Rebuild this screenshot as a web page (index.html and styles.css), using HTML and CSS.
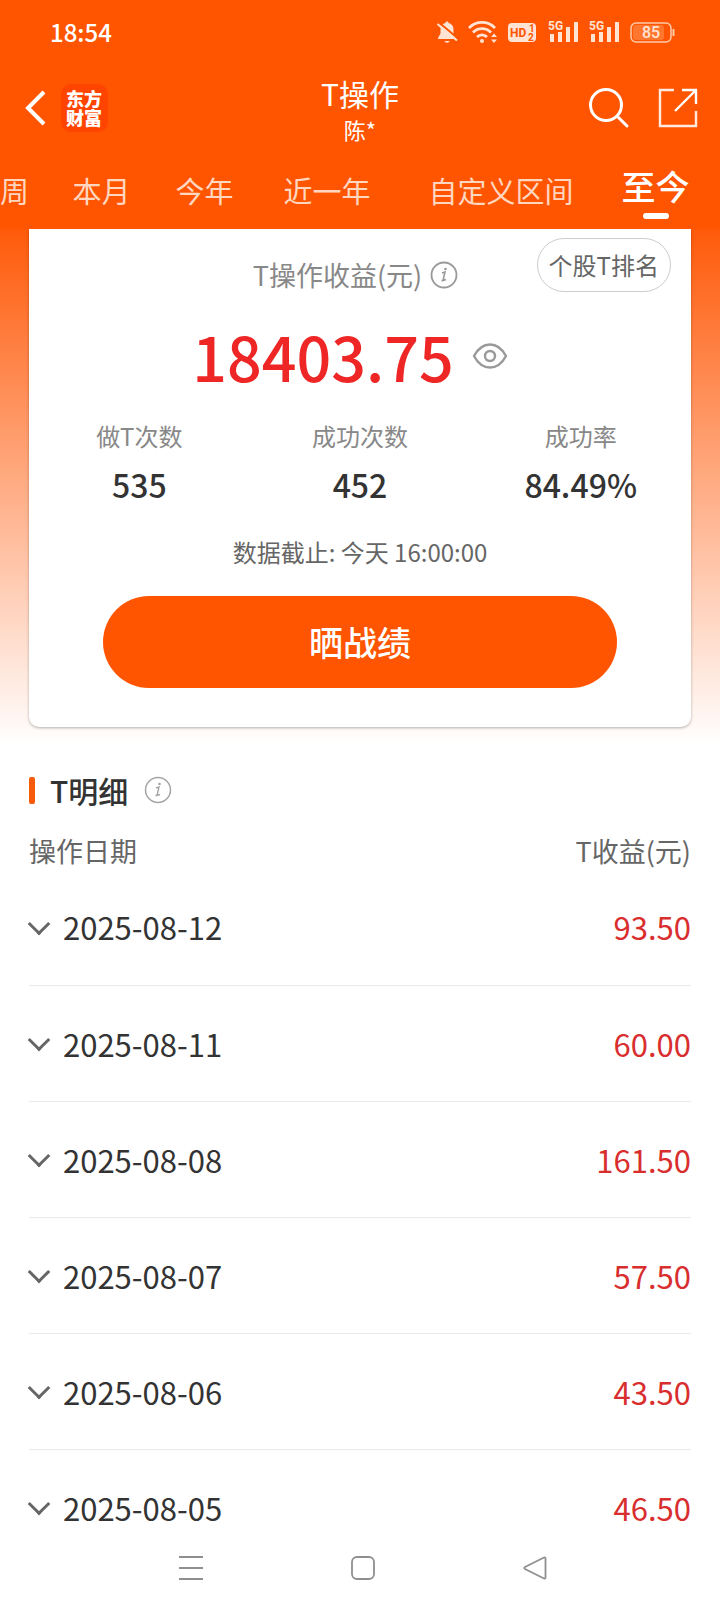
FILE: index.html
```html
<!DOCTYPE html>
<html lang="zh-CN">
<head>
    <meta charset="UTF-8">
    <meta name="viewport" content="width=device-width, initial-scale=1.0">
    <title>T操作</title>
    <link rel="stylesheet" href="styles.css">
</head>
<body>
    <header class="top">
        <div class="status-bar">
            <span class="clock">18:54</span>
            <div class="status-icons">
                <svg width="22" height="24" viewBox="0 0 22 24">
                    <path d="M11 1.500c.9 0 1.500.6 1.500 1.400 3.200.7 5 3.200 5 6.300v4.300l2.500 4.500v1H2v-1l2.500-4.500V9.200c0-3.100 1.800-5.600 5-6.300 0-.8.6-1.400 1.500-1.400zM8.500 21h5a2.500 1.800 0 0 1-5 0z" fill="#ffe3d3"/>
                    <path d="M3 2.500L22 18.500" stroke="#ff5500" stroke-width="2"/>
                    <path d="M1.500 4L21 20.500" stroke="#ffe3d3" stroke-width="2"/>
                </svg>
                <svg width="30" height="24" viewBox="0 0 30 24" fill="none" stroke="#ffe3d3" stroke-width="2.800">
                    <path d="M1 8a18 18 0 0 1 26 0M5 12.500a12.500 12.500 0 0 1 18 0M9 17a7 7 0 0 1 10 0"/>
                    <circle cx="14" cy="21" r="2" fill="#ffe3d3" stroke="none"/>
                    <path d="M23 17l3-3.500 3 3.500zM23 19.500h6l-3 3.500z" fill="#ffe3d3" stroke="none"/>
                </svg>
                <svg width="30" height="24" viewBox="0 0 30 24">
                    <rect x="0" y="3" width="28" height="19" rx="4" fill="#ffe3d3"/>
                    <text x="2" y="17" class="hd-text">HD</text>
                    <text x="21" y="12" class="hd-small">1</text>
                    <text x="20" y="21" class="hd-small">2</text>
                </svg>
                <svg width="31" height="24" viewBox="0 0 31 24" fill="#ffe3d3">
                    <path d="M2 14h4v8H2zM10 12h4v10h-4zM18 7h4v15h-4zM26 2h4v20h-4z"/>
                    <text x="0" y="10" class="net-text">5G</text>
                </svg>
                <svg width="31" height="24" viewBox="0 0 31 24" fill="#ffe3d3">
                    <path d="M2 14h4v8H2zM10 12h4v10h-4zM18 7h4v15h-4zM26 2h4v20h-4z"/>
                    <text x="0" y="10" class="net-text">5G</text>
                </svg>
                <svg width="45" height="24" viewBox="0 0 45 24">
                    <rect x="1" y="3" width="40" height="19" rx="5" fill="none" stroke="#ffc9a8" stroke-width="1.500"/>
                    <rect x="3" y="5" width="31" height="15" rx="3" fill="#ff772f"/>
                    <path d="M43.500 9v7" stroke="#ffc9a8" stroke-width="2"/>
                    <text x="21" y="18" text-anchor="middle" class="battery-text">85</text>
                </svg>
            </div>
        </div>

        <div class="title-bar">
            <div class="title-left">
                <button class="icon-btn" aria-label="返回">
                    <svg width="24" height="38" viewBox="0 0 24 38" fill="none" stroke="#fff" stroke-width="4">
                        <path d="M22 3L6 19l16 16"/>
                    </svg>
                </button>
                <a class="logo" href="#">东方财富</a>
            </div>
            <div class="title-center">
                <h1>T操作</h1>
                <p>陈*</p>
            </div>
            <div class="title-right">
                <button class="icon-btn" aria-label="搜索">
                    <svg width="42" height="42" viewBox="0 0 42 42" fill="none" stroke="#fff" stroke-width="3" stroke-linecap="round">
                        <circle cx="18" cy="18" r="15.500"/>
                        <path d="M29 29l10 10"/>
                    </svg>
                </button>
                <button class="icon-btn" aria-label="分享">
                    <svg width="40" height="40" viewBox="0 0 40 40" fill="none" stroke="#ffeadf" stroke-width="2.400">
                        <path d="M16 2H2v36h36V23"/>
                        <path d="M24 2h14v14M38 2L17 23" stroke="#fff"/>
                    </svg>
                </button>
            </div>
        </div>

        <nav class="tabs">
            <a class="tab tab-first" href="#">周</a>
            <a class="tab" href="#">本月</a>
            <a class="tab" href="#">今年</a>
            <a class="tab tab-mid" href="#">近一年</a>
            <a class="tab tab-long" href="#">自定义区间</a>
            <a class="tab active" href="#">至今</a>
        </nav>
    </header>

    <main class="content">
        <section class="summary">
            <div class="card">
                <div class="card-head">
                    <div class="card-title">
                        <span>T操作收益(元)</span>
                        <svg width="28" height="28" viewBox="0 0 28 28" fill="none" stroke="#999">
                            <circle cx="14" cy="14" r="12.500" stroke-width="1.800"/>
                            <path d="M12 12l3-1-2 8.500 3-1M11.500 19.500l2 0" stroke-width="1.600"/>
                            <circle cx="15.500" cy="8" r="1.300" fill="#999" stroke="none"/>
                        </svg>
                    </div>
                    <button class="rank-btn">个股T排名</button>
                </div>

                <div class="amount-row">
                    <span class="amount">18403.75</span>
                    <button class="icon-btn" aria-label="隐藏金额">
                        <svg width="36" height="28" viewBox="0 0 36 28" fill="none" stroke="#999" stroke-width="2.400">
                            <path d="M2 14C6 6.500 11.500 2.500 18 2.500S30 6.500 34 14c-4 7.500-9.500 11.500-16 11.500S6 21.500 2 14z" stroke-linejoin="round"/>
                            <circle cx="18" cy="14" r="5"/>
                        </svg>
                    </button>
                </div>

                <dl class="stats">
                    <div class="stat">
                        <dt>做T次数</dt>
                        <dd>535</dd>
                    </div>
                    <div class="stat">
                        <dt>成功次数</dt>
                        <dd>452</dd>
                    </div>
                    <div class="stat">
                        <dt>成功率</dt>
                        <dd>84.49%</dd>
                    </div>
                </dl>

                <p class="deadline">数据截止: 今天 16:00:00</p>
                <button class="share-btn">晒战绩</button>
            </div>
        </section>

        <section class="details">
            <div class="section-title">
                <h2>T明细</h2>
                <svg width="28" height="28" viewBox="0 0 28 28" fill="none" stroke="#a5a5a5">
                    <circle cx="14" cy="14" r="12.500" stroke-width="1.500"/>
                    <path d="M12 12l3-1-2 8.500 3-1M11.500 19.500l2 0" stroke-width="1.400"/>
                    <circle cx="15.500" cy="8" r="1.300" fill="#a5a5a5" stroke="none"/>
                </svg>
            </div>

            <table class="list">
                <thead>
                    <tr><th>操作日期</th><th>T收益(元)</th></tr>
                </thead>
                <tbody>
                    <tr>
                        <td><button class="date-btn"><span class="chevron"></span>2025-08-12</button></td>
                        <td>93.50</td>
                    </tr>
                    <tr>
                        <td><button class="date-btn"><span class="chevron"></span>2025-08-11</button></td>
                        <td>60.00</td>
                    </tr>
                    <tr>
                        <td><button class="date-btn"><span class="chevron"></span>2025-08-08</button></td>
                        <td>161.50</td>
                    </tr>
                    <tr>
                        <td><button class="date-btn"><span class="chevron"></span>2025-08-07</button></td>
                        <td>57.50</td>
                    </tr>
                    <tr>
                        <td><button class="date-btn"><span class="chevron"></span>2025-08-06</button></td>
                        <td>43.50</td>
                    </tr>
                    <tr>
                        <td><button class="date-btn"><span class="chevron"></span>2025-08-05</button></td>
                        <td>46.50</td>
                    </tr>
                </tbody>
            </table>
        </section>
    </main>

    <footer class="system-nav">
        <button class="icon-btn" aria-label="最近任务">
            <svg width="26" height="26" viewBox="0 0 26 26" stroke="#8f8f8f" stroke-width="2">
                <path d="M1 2h24M1 13h24M1 24h24"/>
            </svg>
        </button>
        <button class="icon-btn" aria-label="主屏幕">
            <svg width="26" height="26" viewBox="0 0 26 26" fill="none" stroke="#8f8f8f" stroke-width="1.800">
                <rect x="2" y="2" width="22" height="22" rx="5"/>
            </svg>
        </button>
        <button class="icon-btn" aria-label="返回上一页">
            <svg width="26" height="26" viewBox="0 0 26 26" fill="none" stroke="#8f8f8f" stroke-width="1.800" stroke-linejoin="round">
                <path d="M22 2.500L3 12q-1.500 1 0 2l19 9.500q1.500.5 1.500-1V3.500q0-1.500-1.500-1z"/>
            </svg>
        </button>
    </footer>
</body>
</html>
```

FILE: styles.css
```css
* {
    box-sizing: border-box;
    margin: 0;
    padding: 0;
}
body {
    display: flex;
    flex-direction: column;
    height: 100vh;
    overflow: hidden;
    background: #fff;
    color: #333;
    font-family: "Noto Sans CJK SC", sans-serif;
}
button {
    font-family: inherit;
    border: none;
    background: none;
    cursor: pointer;
}
a {
    color: inherit;
    text-decoration: none;
}
svg {
    display: block;
    flex: none;
}

/* header */
.top {
    flex: none;
    background: #ff5500;
    color: #fff;
}
.status-bar {
    display: flex;
    align-items: center;
    justify-content: space-between;
    height: 64px;
    padding: 0 45px 0 50px;
}
.clock {
    font-size: 24px;
    font-weight: 500;
    line-height: 34px;
}
.status-icons {
    display: flex;
    gap: 10px;
}
.hd-text {
    font: bold 12px Roboto, sans-serif;
    fill: #ff5500;
}
.hd-small {
    font: bold 10px Roboto, sans-serif;
    fill: #ff5500;
}
.net-text {
    font: bold 12px Roboto, sans-serif;
}
.battery-text {
    font: 500 16px Roboto, sans-serif;
    fill: #ffe3d3;
}
.title-bar {
    display: grid;
    grid-template-columns: 1fr auto 1fr;
    align-items: center;
    height: 88px;
    padding: 0 22px;
}
.title-left {
    display: flex;
    align-items: center;
    gap: 15px;
}
.logo {
    width: 47px;
    padding: 5px;
    border-radius: 10px;
    background: #ff4400;
    font-size: 18px;
    font-weight: 900;
    line-height: 19px;
}
.title-center {
    padding-top: 3px;
    text-align: center;
}
.title-center h1 {
    font-size: 30px;
    font-weight: 400;
    line-height: 38px;
}
.title-center p {
    font-size: 22px;
    line-height: 34px;
}
.title-right {
    display: flex;
    align-items: center;
    justify-content: flex-end;
    gap: 28px;
}
.tabs {
    display: flex;
    justify-content: space-between;
    height: 77px;
    padding-right: 13px;
}
.tab {
    width: 103px;
    padding-top: 18px;
    font-size: 29px;
    line-height: 40px;
    text-align: center;
    color: #ffd6bf;
}
.tab-first {
    width: 50px;
    text-align: left;
}
.tab-mid {
    width: 142px;
}
.tab-long {
    width: 206px;
}
.tab.active {
    display: flex;
    flex-direction: column;
    align-items: center;
    padding-top: 14px;
    font-size: 34px;
    font-weight: 500;
    color: #fff;
}
.tab.active::after {
    content: "";
    width: 26px;
    height: 6px;
    margin-top: 7px;
    border-radius: 3px;
    background: #fff;
}

/* summary card */
.content {
    flex: 1;
    min-height: 0;
    overflow: hidden;
}
.summary {
    padding: 0 29px 18px;
    background: linear-gradient(#ff5a0a, #fff);
}
.card {
    padding: 9px 0 39px;
    border-radius: 0 0 10px 10px;
    background: #fff;
    box-shadow: 0 1px 3px rgba(0,0,0,0.3);
}
.card-head {
    display: grid;
    grid-template-columns: 1fr auto 1fr;
    align-items: start;
    padding: 0 20px 0 11px;
}
.card-title {
    display: flex;
    grid-column: 2;
    align-items: center;
    gap: 8px;
    padding-top: 17px;
    font-size: 27px;
    line-height: 40px;
    color: #888;
}
.rank-btn {
    justify-self: end;
    padding: 0 11px;
    border: 1px solid #ccc;
    border-radius: 27px;
    font-size: 24px;
    line-height: 52px;
    color: #666;
}
.amount-row {
    display: flex;
    align-items: center;
    justify-content: center;
    gap: 18px;
    margin-top: 25px;
    padding-right: 20px;
}
.amount {
    font-size: 61px;
    font-weight: 500;
    line-height: 72px;
    color: #ee2626;
}
.stats {
    display: grid;
    grid-template-columns: repeat(3, 1fr);
    margin-top: 26px;
    text-align: center;
}
.stat dt {
    font-size: 24px;
    line-height: 36px;
    color: #888;
}
.stat dd {
    margin-top: 8px;
    font-size: 32px;
    font-weight: 500;
    line-height: 44px;
}
.deadline {
    margin-top: 28px;
    font-size: 24px;
    line-height: 36px;
    text-align: center;
    color: #666;
}
.share-btn {
    display: block;
    width: calc(100% - 148px);
    margin: 26px auto 0;
    border-radius: 46px;
    background: #ff5500;
    color: #fff;
    font-size: 34px;
    font-weight: 500;
    line-height: 92px;
}

/* detail list */
.details {
    padding: 23px 29px 0;
}
.section-title {
    display: flex;
    align-items: center;
    gap: 16px;
    height: 44px;
}
.section-title h2 {
    display: flex;
    align-items: center;
    gap: 15px;
    font-size: 30px;
    font-weight: 500;
}
.section-title h2::before {
    content: "";
    width: 6px;
    height: 27px;
    border-radius: 2px;
    background: #f65b0a;
}
.list {
    width: 100%;
    border-collapse: collapse;
}
.list th {
    height: 57px;
    padding-top: 21px;
    font-size: 27px;
    font-weight: 400;
    line-height: 36px;
    text-align: left;
    color: #666;
}
.list td {
    height: 116px;
    border-bottom: 1px solid #ebebeb;
    font-size: 31px;
    color: #d92e2e;
}
.list th:last-child,
.list td:last-child {
    text-align: right;
}
.date-btn {
    display: flex;
    align-items: center;
    gap: 16px;
    padding-left: 2px;
    font-size: 31px;
    color: #333;
}
.chevron {
    width: 16px;
    height: 16px;
    margin-top: -6px;
    border-right: 3px solid #666;
    border-bottom: 3px solid #666;
    transform: rotate(45deg);
}

/* system navigation */
.system-nav {
    display: flex;
    flex: none;
    align-items: center;
    justify-content: center;
    gap: 146px;
    height: 72px;
    padding: 0 0 16px 6px;
    background: #fff;
}
```
